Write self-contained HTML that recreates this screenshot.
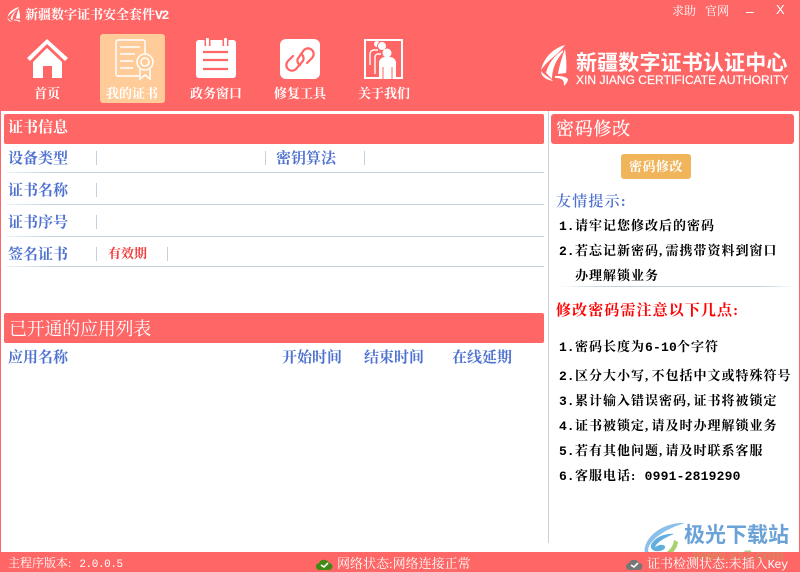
<!DOCTYPE html>
<html><head><meta charset="utf-8">
<style>
html,body{margin:0;padding:0;background:#fff}
#p{position:relative;width:800px;height:572px;overflow:hidden;background:#fff;font-family:"Liberation Serif","Noto Serif CJK SC","WenQuanYi Zen Hei",serif}
#p *{box-sizing:border-box}
.a{position:absolute;white-space:nowrap}
.r{position:absolute;background:#ff6666}
.w{color:#fff}
.t{position:absolute;white-space:nowrap;line-height:20px;font-weight:700}
.b{color:#4f72d0;font-size:15px}
.k{color:#000;font-size:13px;letter-spacing:1px}
.n{display:inline-block;width:16px;font-family:"Liberation Mono",monospace;letter-spacing:0}
.d{font-family:"Liberation Mono",monospace;letter-spacing:.2px}
.c{letter-spacing:3.25px}
.nav{position:absolute;top:86px;width:84px;text-align:center;color:#fff;font-size:13px;font-weight:700;line-height:16px;white-space:nowrap}
.ln{position:absolute;height:1px;background:linear-gradient(90deg,#eef3f6,#c3d2dc 8%,#c3d2dc)}
.sp{position:absolute;width:1px;height:14px;background:#c3d2dc}
</style></head><body><div id="p">
<div class="r" style="left:0;top:0;width:800px;height:111px"></div>
<div class="r" style="left:0;top:111px;width:1px;height:441px"></div>
<div class="r" style="left:799px;top:111px;width:1px;height:441px"></div>

<svg class="a" style="left:7px;top:7px" width="16" height="15" viewBox="0 0 32 30" fill="#fff"><path d="M24 0C13 3 3 10 1 20 6 14 13 8 22 3Z"/><path d="M20 6C13 11 8 17 7 24L11 27C11 18 15 11 21 5Z"/><path d="M23 3C21 10 19 17 18 23H26C26 15 25 9 23 3Z"/><path d="M1 21C1 26 5 29 10 30 7 27 3 25 1 21Z"/><path d="M14 25C19 25 24 26 27 28 26 29 25 30 24 30 24 28 20 27 14 27Z"/></svg>
<div class="a w" style="left:25px;top:7px;font-size:13px;font-weight:700;line-height:16px">新疆数字证书安全套件<span style="font-size:13px;font-family:'Liberation Mono',monospace;letter-spacing:-1.3px">V2</span></div>
<div class="a w" style="left:672px;top:4px;font-size:12px;line-height:15px">求助</div>
<div class="a w" style="left:705px;top:4px;font-size:12px;line-height:15px">官网</div>
<div class="r" style="left:746px;top:12px;width:8px;height:1px;background:#fff"></div>
<div class="a w" style="left:776px;top:2px;font-size:13px;line-height:16px;font-family:'Liberation Sans',sans-serif">X</div>

<svg class="a" style="left:27px;top:38px" width="41" height="41" viewBox="0 0 41 41"><path d="M0 20 20 1 41 20 38 23 20 6 3 23z" fill="#fff"/><path d="M6 24 20 10 35 24V40H25V28H16V40H6z" fill="#fff"/></svg>
<div class="nav" style="left:5px">首页</div>

<div class="a" style="left:100px;top:34px;width:65px;height:69px;background:#ffcc99;border-radius:3px"></div>
<svg class="a" style="left:115px;top:39px" width="39" height="41" viewBox="0 0 39 41" fill="none" stroke="#fff" stroke-width="1.500"><path d="M24 37H3a2 2 0 0 1-2-2V3a2 2 0 0 1 2-2h25a2 2 0 0 1 2 2v12"/><path d="M5 8H25M5 15H20M5 22H18M5 29H18"/><circle cx="30" cy="23" r="8"/><circle cx="30" cy="23" r="4"/><path d="M25 30V40L30 36 35 40V30"/></svg>
<div class="nav" style="left:90px">我的证书</div>

<svg class="a" style="left:196px;top:38px" width="40" height="41" viewBox="0 0 40 41"><path d="M3 2H37a3 3 0 0 1 3 3V37a3 3 0 0 1-3 3H3a3 3 0 0 1-3-3V5a3 3 0 0 1 3-3z" fill="#fff"/><path d="M8.500 2h6v6h-6zM26.500 2h6v6h-6z" fill="#ff6666"/><rect x="10" y="0" width="3" height="8" rx="1" fill="#fff"/><rect x="28" y="0" width="3" height="8" rx="1" fill="#fff"/><path d="M7 14H32M7 22H32M7 31H32" stroke="#ff6666" stroke-width="2.200"/></svg>
<div class="nav" style="left:174px">政务窗口</div>

<svg class="a" style="left:280px;top:39px" width="40" height="40" viewBox="0 0 40 40"><rect width="40" height="40" rx="6" fill="#fff"/><g fill="none" stroke="#ff6666" stroke-width="2.200" stroke-linecap="round"><path d="M20 26a5 5 0 0 1-1-8L24 11a5.500 5.500 0 0 1 8 8L27 24"/><path d="M21 15a5 5 0 0 1 1 8L16 30a5.500 5.500 0 0 1-8-8L13 17"/></g></svg>
<div class="nav" style="left:258px">修复工具</div>

<svg class="a" style="left:364px;top:39px" width="40" height="40" viewBox="0 0 40 40"><rect x="1" y="1" width="37" height="38" fill="none" stroke="#fff" stroke-width="2"/><circle cx="13" cy="5" r="3" fill="#fff"/><circle cx="18" cy="7" r="4.500" fill="#fff" stroke="#ff6666"/><circle cx="23" cy="14" r="4.500" fill="#fff"/><path d="M15 40V24a6 6 0 0 1 6-6h5a6 6 0 0 1 6 6V40z" fill="#fff"/><path d="M19 28V40M28 28V40" stroke="#ff6666" stroke-width="1"/><path d="M14 11H10a4 4 0 0 0-4 4V26M17 15H14a3 3 0 0 0-3 3V35" fill="none" stroke="#fff" stroke-width="1.400"/></svg>
<div class="nav" style="left:342px">关于我们</div>

<svg class="a" style="left:538px;top:43px" width="32" height="46" viewBox="0 0 32 46" fill="#fff"><path d="M27 2C16 5 6 14 3 27 8 20 14 15 19 11 22 8 25 5 27 2Z"/><path d="M25 7C16 13 10 21 8 30L14 36C14 26 18 17 25 9Z"/><path d="M27 6C24 14 21 24 20 31L28 30C29 22 28 13 27 6Z"/><path d="M3 28C3 33 8 37 15 38 12 35 6 32 3 28Z"/><path d="M17 33C22 33 27 33 30 36 30 39 27 42 26 43 26 40 26 37 23 36 21 35 19 35 17 35Z"/></svg>
<div class="a w" style="left:576px;top:48px;font-size:21px;font-weight:700;line-height:28px;letter-spacing:.15px;font-family:'Noto Sans CJK SC',sans-serif">新疆数字证书认证中心</div>
<div class="a w" style="left:576px;top:73px;font-size:12px;line-height:14px;font-family:'Liberation Sans',sans-serif;letter-spacing:.03px;-webkit-text-stroke:.2px #fff">XIN JIANG CERTIFICATE AUTHORITY</div>

<div class="r" style="left:4px;top:114px;width:540px;height:30px;border-radius:2px"></div>
<div class="t w" style="left:8px;top:118px;font-size:15px">证书信息</div>
<div class="t b" style="left:8px;top:149px">设备类型</div>
<div class="sp" style="left:96px;top:151px"></div>
<div class="sp" style="left:265px;top:151px"></div>
<div class="t b" style="left:276px;top:149px">密钥算法</div>
<div class="sp" style="left:364px;top:151px"></div>
<div class="ln" style="left:6px;top:172px;width:538px"></div>
<div class="t b" style="left:8px;top:181px">证书名称</div>
<div class="sp" style="left:96px;top:183px"></div>
<div class="ln" style="left:6px;top:204px;width:538px"></div>
<div class="t b" style="left:8px;top:213px">证书序号</div>
<div class="sp" style="left:96px;top:215px"></div>
<div class="ln" style="left:6px;top:236px;width:538px"></div>
<div class="t b" style="left:8px;top:245px">签名证书</div>
<div class="sp" style="left:96px;top:247px"></div>
<div class="t" style="left:108px;top:244px;font-size:13px;color:#f33c3c">有效期</div>
<div class="sp" style="left:167px;top:247px"></div>
<div class="ln" style="left:6px;top:266px;width:538px"></div>

<div class="r" style="left:4px;top:313px;width:540px;height:30px;border-radius:2px"></div>
<div class="a w" style="left:9px;top:319px;font-size:18px;line-height:20px;letter-spacing:-.25px">已开通的应用列表</div>
<div class="t b" style="left:8px;top:348px">应用名称</div>
<div class="t b" style="left:282px;top:348px">开始时间</div>
<div class="t b" style="left:364px;top:348px">结束时间</div>
<div class="t b" style="left:452px;top:348px">在线延期</div>

<div class="a" style="left:548px;top:111px;width:1px;height:432px;background:#c3d2dc"></div>
<div class="r" style="left:551px;top:114px;width:243px;height:30px;border-radius:3px"></div>
<div class="a w" style="left:556px;top:118px;font-size:18px;line-height:22px;letter-spacing:.7px;-webkit-text-stroke:.2px #fff">密码修改</div>
<div class="a" style="left:621px;top:154px;width:70px;height:25px;background:#f0b45a;border-radius:3px;color:#fff;font-size:13px;font-weight:700;line-height:25px;text-align:center;letter-spacing:.5px">密码修改</div>
<div class="a" style="left:556px;top:192px;font-size:15px;line-height:20px;color:#4f72d0;font-weight:600;letter-spacing:1.200px">友情提示:</div>
<div class="t k" style="left:559px;top:216px"><span class="n">1.</span>请牢记您修改后的密码</div>
<div class="t k" style="left:559px;top:241px"><span class="n">2.</span>若忘记新密码<span class="c">,</span>需携带资料到窗口</div>
<div class="t k" style="left:575px;top:266px">办理解锁业务</div>
<div class="ln" style="left:558px;top:286px;width:238px;background:linear-gradient(90deg,#fff,#c3d2dc 20%,#c3d2dc 85%,#fff)"></div>
<div class="a" style="left:556px;top:301px;font-size:15px;line-height:20px;color:#f00;font-weight:700;letter-spacing:1.100px">修改密码需注意以下几点:</div>
<div class="t k" style="left:559px;top:337px"><span class="n">1.</span>密码长度为<span class="d">6-10</span>个字符</div>
<div class="t k" style="left:559px;top:366px"><span class="n">2.</span>区分大小写<span class="c">,</span>不包括中文或特殊符号</div>
<div class="t k" style="left:559px;top:391px"><span class="n">3.</span>累计输入错误密码<span class="c">,</span>证书将被锁定</div>
<div class="t k" style="left:559px;top:416px"><span class="n">4.</span>证书被锁定<span class="c">,</span>请及时办理解锁业务</div>
<div class="t k" style="left:559px;top:441px"><span class="n">5.</span>若有其他问题<span class="c">,</span>请及时联系客服</div>
<div class="t k" style="left:559px;top:466px"><span class="n">6.</span>客服电话: <span class="d" style="margin-left:4px">0991-2819290</span></div>

<svg class="a" style="left:640px;top:520px" width="46" height="40" viewBox="0 0 46 40"><path d="M45 3C28 2 9 12 5 27 3 33 8 37 13 38 7 34 7 28 11 23 19 13 32 7 45 3Z" fill="#8cc0ea"/><path d="M34 14C24 13 14 18 11 25 10 30 15 32 20 31 25 30 27 26 23 25 20 24 17 26 15 27 17 22 26 17 34 14Z" fill="#62aede"/><path d="M34 20C33 28 27 35 14 36 24 39 36 35 38 22Z" fill="#a8d070"/></svg>
<div class="a" style="left:684px;top:521px;font-size:21px;line-height:26px;font-weight:700;color:#6ba3d8;font-family:'Noto Sans CJK SC',sans-serif">极光下载站</div>
<div class="a" style="left:693px;top:546px;font-size:14px;line-height:18px;font-weight:700;color:#a9cf8c;font-family:'Liberation Sans',sans-serif">www.xz7.com</div>
<div class="r" style="left:0;top:552px;width:800px;height:20px"></div>
<div class="a" style="left:693px;top:546px;font-size:14px;line-height:18px;font-weight:700;color:rgba(170,170,80,.45);font-family:'Liberation Sans',sans-serif;clip-path:inset(6px 0 0 0)">www.xz7.com</div>
<div class="a w" style="left:8px;top:556px;font-size:12px;line-height:15px">主程序版本:<span style="font-family:'Liberation Mono',monospace;font-size:11px;letter-spacing:-.4px;margin-left:8px">2.0.0.5</span></div>
<svg class="a" style="left:316px;top:558px" width="17" height="13" viewBox="0 0 17 13"><path d="M4 12a3.500 3.500 0 0 1-1-7 5.500 5.500 0 0 1 10 0 3.500 3.500 0 0 1 0 7z" fill="#3f8a12"/><path d="M5 7 8 9 12 5" stroke="#fff" stroke-width="1.600" fill="none"/></svg>
<div class="a w" style="left:337px;top:556px;font-size:13px;line-height:15px">网络状态:网络连接正常</div>
<svg class="a" style="left:626px;top:558px" width="17" height="13" viewBox="0 0 17 13"><path d="M4 12a3.500 3.500 0 0 1-1-7 5.500 5.500 0 0 1 10 0 3.500 3.500 0 0 1 0 7z" fill="#777"/><path d="M5 7 8 9 12 5" stroke="#fff" stroke-width="1.600" fill="none"/></svg>
<div class="a w" style="left:647px;top:556px;font-size:13px;line-height:15px">证书检测状态:未插入<span style="font-family:'Liberation Mono',monospace;font-size:12px;letter-spacing:-.5px">Key</span></div>
</div></body></html>
